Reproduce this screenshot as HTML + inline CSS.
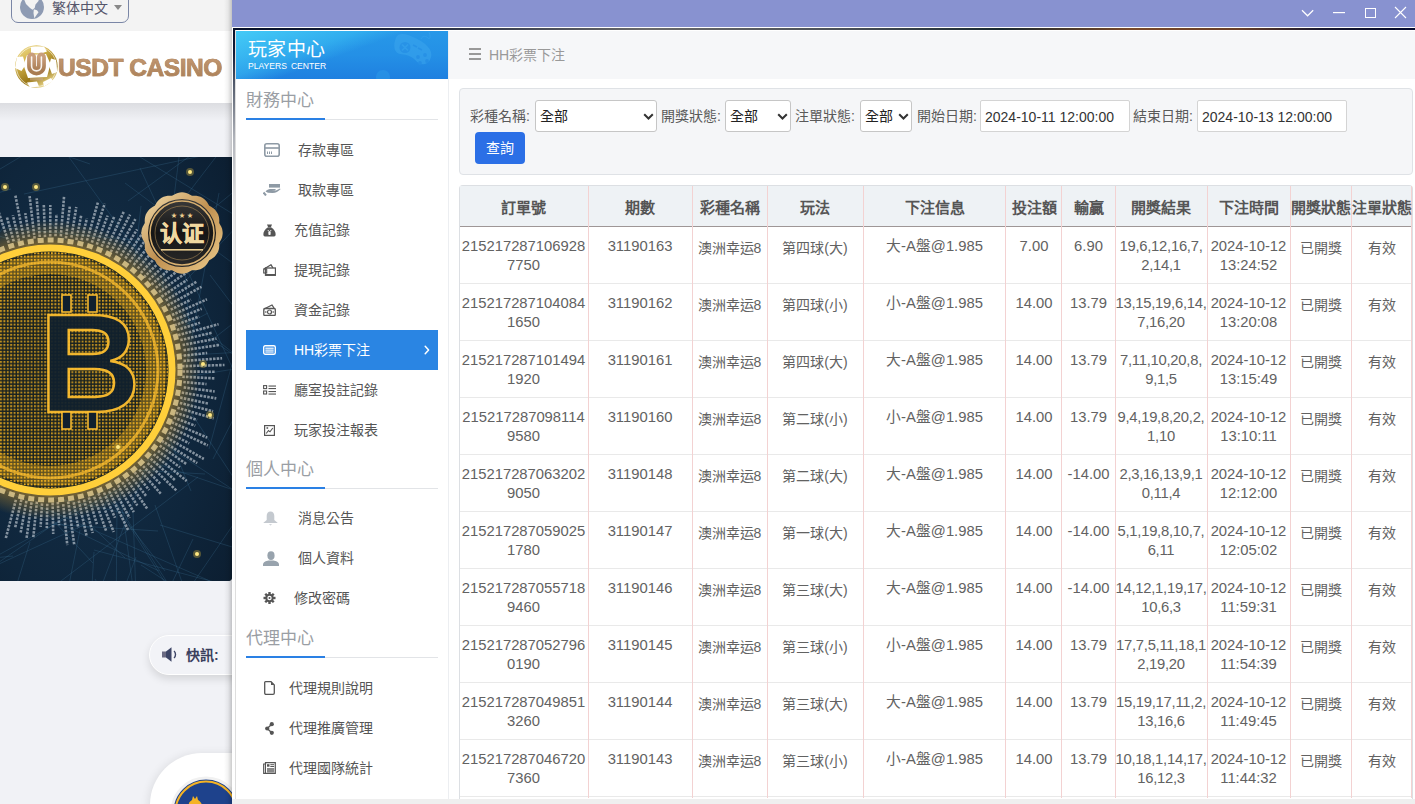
<!DOCTYPE html>
<html lang="zh-TW">
<head>
<meta charset="utf-8">
<style>
*{box-sizing:border-box;margin:0;padding:0}
html,body{width:1415px;height:804px;overflow:hidden}
body{position:relative;background:#f1f2f6;font-family:"Liberation Sans",sans-serif;color:#555}
.abs{position:absolute}
/* left site */
#topstrip{left:0;top:0;width:232px;height:31px;background:#f3f3f3}
#lang{left:11px;top:-10px;width:118px;height:33px;border:1px solid #7a86a6;border-radius:7px;background:#f3f3f3}
#logobar{left:0;top:31px;width:232px;height:72px;background:#fff}
#logoshadow{left:0;top:103px;width:232px;height:18px;background:linear-gradient(#dcdde1,#f1f2f6)}
#btc{left:0;top:157px;width:232px;height:424px;border-radius:0 0 4px 0;overflow:hidden;background:#0b1d33}
#pill{left:149px;top:635px;width:120px;height:40px;border-radius:20px;background:#f2f3f7;border:1px solid #fff;box-shadow:0 4px 8px rgba(0,0,0,.12)}
#circle{left:150px;top:753px;width:200px;height:200px;border-radius:52px;background:#fff;box-shadow:-2px 0 8px rgba(0,0,0,.08)}
#winshadow{left:224px;top:0;width:8px;height:804px;background:linear-gradient(90deg,rgba(0,0,0,0),rgba(0,0,0,.05) 50%,rgba(0,0,0,.2))}
/* window */
#titlebar{left:232px;top:0;width:1183px;height:27px;background:#8892d0}
#win{left:232px;top:27px;width:1183px;height:777px;background:#fff}
#wtop{left:233px;top:28px;width:1182px;height:2px;background:linear-gradient(90deg,#06102a 0%,#1a2238 12%,#3a4050 22%,#6a6a6a 35%,#4a5058 52%,#1a2a30 65%,#7a4a2a 76%,#6a4028 85%,#1a1a30 92%,#02082a 100%)}
#wleft{left:233px;top:28px;width:2px;height:776px;background:linear-gradient(#06102a 0px,#121c3a 25px,#5a6272 60px,#b0b3ba 110px,#e8e8e8 180px,#fafafa 300px,#fff 100%)}
#sidebar{left:236px;top:31px;width:212px;height:773px;background:#fff}
#sbhead{left:236px;top:31px;width:212px;height:48px;background:linear-gradient(160deg,rgba(75,215,250,.8) 0%,rgba(60,195,245,.5) 36%,rgba(60,190,245,0) 50%),linear-gradient(180deg,#2798e8 0%,#2490e6 50%,#1f80e0 100%);overflow:hidden}
#main{left:448px;top:31px;width:967px;height:773px;background:#fff;border-left:1px solid #eceef1}
#crumb{left:449px;top:31px;width:966px;height:48px;background:#f6f7f9}
#bottomstrip{left:232px;top:799px;width:1183px;height:5px;background:#efefef}
#wline{left:235px;top:30px;width:1px;height:774px;background:#dedede}

/* sidebar content */
.sbt{position:absolute;left:246px;width:192px;height:40px;font-size:17px;line-height:40px;color:#9a9ea4;border-bottom:1px solid #e2e4e7}
.sbt span{position:relative;top:.5px}
.sbt:after{content:"";position:absolute;left:0;bottom:-1px;width:79px;height:2px;background:#2a80e4}
.mi{position:absolute;left:246px;width:192px;height:40px;font-size:14px;line-height:40px;color:#555}
.mi .ic{position:absolute;top:0;height:40px;display:flex;align-items:center}
.mi .tx{position:absolute;top:0}
.mi.act{background:#2a85e3;color:#fff}
.mi.act .chev{position:absolute;left:178px;top:0;font-size:14px}
#sbtitle{left:248px;top:39.5px;font-size:19px;line-height:20px;color:#fff;white-space:nowrap;letter-spacing:.4px}
#sbsub{left:248px;top:60.5px;font-size:8.6px;line-height:10px;color:#fff;letter-spacing:0;white-space:nowrap;word-spacing:1.5px}

/* main content */
#ham{left:469px;top:48px;width:12px;height:12px}
#crumbtx{left:489px;top:45px;font-size:14px;line-height:20px;color:#999;white-space:nowrap}
#filter{left:459px;top:88px;width:954px;height:87px;background:#f5f6f8;border:1px solid #dfe2e6;border-radius:4px}
.lb{position:absolute;top:106px;font-size:14px;line-height:20px;color:#5a5a5a;white-space:nowrap}
.sel{position:absolute;top:100px;height:32px;background:#fff;border:1px solid #c6c6c6;border-radius:3px;font-size:14px;line-height:30px;color:#222;padding-left:4px;white-space:nowrap}
.sel svg{display:block}
.inp{position:absolute;top:100px;height:32px;background:#fff;border:1px solid #d4d4d4;border-radius:2px;font-size:14px;line-height:32px;color:#333;padding-left:4px;white-space:nowrap}
#btn{left:475px;top:132px;width:50px;height:32px;background:#2b6fe6;border-radius:4px;color:#fff;font-size:14px;line-height:32px;text-align:center}

/* table */
#tbl{left:459px;top:185px;width:954px;height:619px;background:#fff;border:1px solid #dcdfe3;border-bottom:none;border-radius:4px 4px 0 0;overflow:hidden}
#thead{left:460px;top:186px;width:952px;height:40px;background:#eef2f5}
#thline{left:460px;top:226px;width:952px;height:1px;background:#9e9696}
.hl{position:absolute;left:460px;width:952px;height:1px;background:#e9e9e9}
.vl{position:absolute;top:186px;width:1px;height:612px;background:#f3d2d2}
.th{position:absolute;top:198px;height:20px;font-size:15px;font-weight:bold;line-height:20px;color:#555;text-align:center;white-space:nowrap}
.td{position:absolute;font-size:14.8px;line-height:19px;color:#626262;text-align:center;white-space:nowrap}
.cj{font-size:14px;margin-top:2px}
</style>
</head>
<body>
<div id="topstrip" class="abs"></div>
<div id="lang" class="abs"></div>
<svg class="abs" style="left:20px;top:-5px" width="24" height="24" viewBox="0 0 24 24"><circle cx="12" cy="12" r="12" fill="#8e9bb3"/><path d="M3.5 3 L19 3 L18.5 6 L15.5 9.5 L14.7 13 L12.5 14.8 L10 13 L6 9 Z" fill="#f3f3f3"/><path d="M13.8 14.3 L17 15.2 L18.5 17.3 L14.3 23.2 L13.5 18 Z" fill="#f3f3f3"/></svg>
<div class="abs" style="left:52px;top:-2.5px;font-size:14px;line-height:20px;color:#55556a;white-space:nowrap">繁体中文</div>
<svg class="abs" style="left:114px;top:5px" width="8" height="5" viewBox="0 0 8 5"><path d="M0 0 L8 0 L4 5 Z" fill="#888"/></svg>
<div id="logobar" class="abs"></div>
<svg class="abs" style="left:13px;top:44px" width="46" height="46" viewBox="0 0 46 46">
<defs><linearGradient id="gball" x1="0" y1="0" x2=".6" y2="1"><stop offset="0" stop-color="#f2e4a0"/><stop offset=".35" stop-color="#d8b850"/><stop offset=".75" stop-color="#9a7818"/><stop offset="1" stop-color="#e8d488"/></linearGradient>
<linearGradient id="gtxt" x1="0" y1="0" x2="0" y2="1"><stop offset="0" stop-color="#c99e7c"/><stop offset="1" stop-color="#a97c52"/></linearGradient></defs>
<circle cx="23.4" cy="22.5" r="21.3" fill="url(#gball)"/>
<circle cx="23.4" cy="22.5" r="20" fill="none" stroke="#fff" stroke-width=".8" opacity=".7"/>
<g fill="#fff">
<polygon points="18,3 31,2.5 34,7.5 28,9.5 18,9"/>
<polygon points="4,13 10,12.5 12.5,21 8.5,27 2,24"/>
<polygon points="38,14.5 43,16 44.2,28 39,30 36,22"/>
<polygon points="14,38.5 24,37.5 26,42.5 17,43.5"/>
<polygon points="30,38 38,34 40,37 31,42.5"/>
<polygon points="14,11 33,10 37.5,20 34,33 15,34 10.5,21"/>
</g>
<path d="M18.6 13.1 L18.6 22 C18.6 28.5 28.4 28.5 28.4 22 L28.4 13.1" fill="none" stroke="url(#gtxt)" stroke-width="9" stroke-linecap="round"/>
<path d="M18.6 13.1 L18.6 22 C18.6 28.5 28.4 28.5 28.4 22 L28.4 13.1" fill="none" stroke="#fff" stroke-width="1.6" stroke-linecap="round" opacity=".9"/>
<rect x="17" y="34" width="13" height="2.4" fill="#c8a890" opacity=".6"/>
</svg>
<div class="abs" style="left:58px;top:52px;font-size:24.5px;line-height:32px;font-weight:bold;white-space:nowrap;letter-spacing:-.45px;color:#b58b66;background:linear-gradient(#c99e78,#a57a50);-webkit-background-clip:text;background-clip:text;-webkit-text-fill-color:transparent;-webkit-text-stroke:.6px #b08660">USDT CASINO</div>
<div id="logoshadow" class="abs"></div>
<div id="btc" class="abs"><svg width="232" height="424" viewBox="0 0 232 424"><defs>
<radialGradient id="bgg" cx=".35" cy=".5" r=".9"><stop offset="0" stop-color="#15314a"/><stop offset=".6" stop-color="#0f263c"/><stop offset="1" stop-color="#0b1c2e"/></radialGradient>
<pattern id="dots" width="3.4" height="3.4" patternUnits="userSpaceOnUse"><rect width="2" height="2" fill="#f0b020"/></pattern>
<radialGradient id="cmask" cx=".5" cy=".5" r=".5"><stop offset="0" stop-color="#0e1a22" stop-opacity=".35"/><stop offset=".6" stop-color="#0e1a22" stop-opacity=".2"/><stop offset=".85" stop-color="#0e1a22" stop-opacity=".1"/><stop offset="1" stop-color="#0e1a22" stop-opacity="0"/></radialGradient>
<radialGradient id="glow" cx=".5" cy=".5" r=".5"><stop offset=".7" stop-color="#ffb020" stop-opacity="0"/><stop offset=".82" stop-color="#ffb020" stop-opacity=".45"/><stop offset="1" stop-color="#ffb020" stop-opacity="0"/></radialGradient>
<linearGradient id="badge" x1="0" y1="0" x2="1" y2="1"><stop offset="0" stop-color="#f4e0b0"/><stop offset=".5" stop-color="#c09050"/><stop offset="1" stop-color="#f0d090"/></linearGradient>
<linearGradient id="bdark" x1="0" y1="0" x2="0" y2="1"><stop offset="0" stop-color="#3a3a3a"/><stop offset=".5" stop-color="#151515"/><stop offset="1" stop-color="#2a2a2a"/></linearGradient>
<clipPath id="cc"><circle cx="50" cy="213" r="118"/></clipPath>
</defs><rect width="232" height="424" fill="url(#bgg)"/><line x1="98" y1="242" x2="-79" y2="285" stroke="#3f7598" stroke-width=".6" opacity=".45"/><line x1="118" y1="257" x2="279" y2="363" stroke="#3f7598" stroke-width=".6" opacity=".45"/><line x1="160" y1="368" x2="301" y2="411" stroke="#3f7598" stroke-width=".6" opacity=".45"/><line x1="-28" y1="377" x2="-79" y2="450" stroke="#3f7598" stroke-width=".6" opacity=".45"/><line x1="284" y1="461" x2="184" y2="652" stroke="#3f7598" stroke-width=".6" opacity=".45"/><line x1="-5" y1="-52" x2="-13" y2="41" stroke="#3f7598" stroke-width=".6" opacity=".45"/><line x1="7" y1="71" x2="188" y2="88" stroke="#3f7598" stroke-width=".6" opacity=".45"/><line x1="94" y1="395" x2="81" y2="615" stroke="#3f7598" stroke-width=".6" opacity=".45"/><line x1="115" y1="298" x2="134" y2="438" stroke="#3f7598" stroke-width=".6" opacity=".45"/><line x1="289" y1="478" x2="83" y2="591" stroke="#3f7598" stroke-width=".6" opacity=".45"/><line x1="50" y1="64" x2="109" y2="139" stroke="#3f7598" stroke-width=".6" opacity=".45"/><line x1="208" y1="156" x2="62" y2="233" stroke="#3f7598" stroke-width=".6" opacity=".45"/><line x1="275" y1="398" x2="401" y2="398" stroke="#3f7598" stroke-width=".6" opacity=".45"/><line x1="259" y1="194" x2="91" y2="204" stroke="#3f7598" stroke-width=".6" opacity=".45"/><line x1="-34" y1="280" x2="-141" y2="369" stroke="#3f7598" stroke-width=".6" opacity=".45"/><line x1="-29" y1="120" x2="-275" y2="147" stroke="#3f7598" stroke-width=".6" opacity=".45"/><line x1="-19" y1="73" x2="70" y2="102" stroke="#3f7598" stroke-width=".6" opacity=".45"/><line x1="219" y1="36" x2="186" y2="211" stroke="#3f7598" stroke-width=".6" opacity=".45"/><line x1="7" y1="335" x2="210" y2="424" stroke="#3f7598" stroke-width=".6" opacity=".45"/><line x1="-19" y1="167" x2="90" y2="254" stroke="#3f7598" stroke-width=".6" opacity=".45"/><line x1="280" y1="374" x2="438" y2="598" stroke="#3f7598" stroke-width=".6" opacity=".45"/><line x1="14" y1="153" x2="-185" y2="251" stroke="#3f7598" stroke-width=".6" opacity=".45"/><line x1="-25" y1="474" x2="82" y2="559" stroke="#3f7598" stroke-width=".6" opacity=".45"/><line x1="210" y1="118" x2="268" y2="195" stroke="#3f7598" stroke-width=".6" opacity=".45"/><line x1="-28" y1="255" x2="125" y2="401" stroke="#3f7598" stroke-width=".6" opacity=".45"/><line x1="70" y1="185" x2="-115" y2="209" stroke="#3f7598" stroke-width=".6" opacity=".45"/><line x1="141" y1="408" x2="237" y2="470" stroke="#3f7598" stroke-width=".6" opacity=".45"/><line x1="258" y1="382" x2="344" y2="468" stroke="#3f7598" stroke-width=".6" opacity=".45"/><line x1="199" y1="448" x2="434" y2="615" stroke="#3f7598" stroke-width=".6" opacity=".45"/><line x1="249" y1="266" x2="274" y2="366" stroke="#3f7598" stroke-width=".6" opacity=".45"/><line x1="-46" y1="460" x2="126" y2="620" stroke="#3f7598" stroke-width=".6" opacity=".45"/><line x1="30" y1="385" x2="-13" y2="523" stroke="#3f7598" stroke-width=".6" opacity=".45"/><line x1="1" y1="329" x2="129" y2="357" stroke="#3f7598" stroke-width=".6" opacity=".45"/><line x1="136" y1="400" x2="86" y2="533" stroke="#3f7598" stroke-width=".6" opacity=".45"/><line x1="261" y1="50" x2="400" y2="57" stroke="#3f7598" stroke-width=".6" opacity=".45"/><line x1="96" y1="-27" x2="233" y2="57" stroke="#3f7598" stroke-width=".6" opacity=".45"/><line x1="140" y1="11" x2="256" y2="262" stroke="#3f7598" stroke-width=".6" opacity=".45"/><line x1="283" y1="295" x2="165" y2="467" stroke="#3f7598" stroke-width=".6" opacity=".45"/><line x1="-11" y1="-41" x2="269" y2="-25" stroke="#3f7598" stroke-width=".6" opacity=".45"/><line x1="185" y1="460" x2="405" y2="475" stroke="#3f7598" stroke-width=".6" opacity=".45"/><line x1="109" y1="334" x2="270" y2="587" stroke="#3f7598" stroke-width=".6" opacity=".45"/><line x1="-34" y1="235" x2="-222" y2="439" stroke="#3f7598" stroke-width=".6" opacity=".45"/><line x1="198" y1="320" x2="-26" y2="490" stroke="#3f7598" stroke-width=".6" opacity=".45"/><line x1="63" y1="310" x2="-195" y2="393" stroke="#3f7598" stroke-width=".6" opacity=".45"/><line x1="86" y1="367" x2="-101" y2="453" stroke="#3f7598" stroke-width=".6" opacity=".45"/><line x1="159" y1="146" x2="104" y2="353" stroke="#3f7598" stroke-width=".6" opacity=".45"/><line x1="-32" y1="285" x2="-305" y2="291" stroke="#3f7598" stroke-width=".6" opacity=".45"/><line x1="195" y1="150" x2="55" y2="303" stroke="#3f7598" stroke-width=".6" opacity=".45"/><line x1="94" y1="393" x2="331" y2="456" stroke="#3f7598" stroke-width=".6" opacity=".45"/><line x1="-50" y1="265" x2="-42" y2="395" stroke="#3f7598" stroke-width=".6" opacity=".45"/><line x1="184" y1="209" x2="85" y2="473" stroke="#3f7598" stroke-width=".6" opacity=".45"/><line x1="30" y1="-54" x2="164" y2="132" stroke="#3f7598" stroke-width=".6" opacity=".45"/><line x1="11" y1="32" x2="-204" y2="97" stroke="#3f7598" stroke-width=".6" opacity=".45"/><line x1="95" y1="422" x2="212" y2="615" stroke="#3f7598" stroke-width=".6" opacity=".45"/><line x1="9" y1="173" x2="-221" y2="334" stroke="#3f7598" stroke-width=".6" opacity=".45"/><line x1="248" y1="148" x2="209" y2="292" stroke="#3f7598" stroke-width=".6" opacity=".45"/><line x1="-12" y1="208" x2="-245" y2="339" stroke="#3f7598" stroke-width=".6" opacity=".45"/><line x1="189" y1="453" x2="265" y2="543" stroke="#3f7598" stroke-width=".6" opacity=".45"/><line x1="98" y1="89" x2="232" y2="195" stroke="#3f7598" stroke-width=".6" opacity=".45"/><line x1="159" y1="207" x2="304" y2="428" stroke="#3f7598" stroke-width=".6" opacity=".45"/><line x1="284" y1="184" x2="368" y2="205" stroke="#3f7598" stroke-width=".6" opacity=".45"/><line x1="245" y1="-38" x2="120" y2="125" stroke="#3f7598" stroke-width=".6" opacity=".45"/><line x1="48" y1="367" x2="158" y2="374" stroke="#3f7598" stroke-width=".6" opacity=".45"/><line x1="99" y1="-47" x2="-15" y2="21" stroke="#3f7598" stroke-width=".6" opacity=".45"/><line x1="-11" y1="-35" x2="-81" y2="129" stroke="#3f7598" stroke-width=".6" opacity=".45"/><line x1="160" y1="294" x2="-79" y2="459" stroke="#3f7598" stroke-width=".6" opacity=".45"/><line x1="180" y1="48" x2="189" y2="167" stroke="#3f7598" stroke-width=".6" opacity=".45"/><line x1="-56" y1="195" x2="-131" y2="288" stroke="#3f7598" stroke-width=".6" opacity=".45"/><line x1="35" y1="127" x2="-78" y2="285" stroke="#3f7598" stroke-width=".6" opacity=".45"/><line x1="155" y1="348" x2="239" y2="588" stroke="#3f7598" stroke-width=".6" opacity=".45"/><line x1="257" y1="-13" x2="24" y2="37" stroke="#3f7598" stroke-width=".6" opacity=".45"/><line x1="-15" y1="185" x2="-122" y2="444" stroke="#3f7598" stroke-width=".6" opacity=".45"/><line x1="72" y1="247" x2="-165" y2="342" stroke="#3f7598" stroke-width=".6" opacity=".45"/><line x1="270" y1="190" x2="213" y2="302" stroke="#3f7598" stroke-width=".6" opacity=".45"/><line x1="193" y1="382" x2="90" y2="597" stroke="#3f7598" stroke-width=".6" opacity=".45"/><line x1="15" y1="426" x2="-280" y2="444" stroke="#3f7598" stroke-width=".6" opacity=".45"/><line x1="128" y1="367" x2="278" y2="604" stroke="#3f7598" stroke-width=".6" opacity=".45"/><line x1="240" y1="128" x2="411" y2="174" stroke="#3f7598" stroke-width=".6" opacity=".45"/><line x1="133" y1="355" x2="136" y2="441" stroke="#3f7598" stroke-width=".6" opacity=".45"/><line x1="223" y1="-25" x2="128" y2="44" stroke="#3f7598" stroke-width=".6" opacity=".45"/><line x1="57" y1="365" x2="159" y2="414" stroke="#3f7598" stroke-width=".6" opacity=".45"/><line x1="121" y1="331" x2="-82" y2="442" stroke="#3f7598" stroke-width=".6" opacity=".45"/><line x1="271" y1="206" x2="173" y2="222" stroke="#3f7598" stroke-width=".6" opacity=".45"/><line x1="17" y1="224" x2="165" y2="414" stroke="#3f7598" stroke-width=".6" opacity=".45"/><line x1="164" y1="222" x2="-16" y2="318" stroke="#3f7598" stroke-width=".6" opacity=".45"/><line x1="49" y1="146" x2="-197" y2="276" stroke="#3f7598" stroke-width=".6" opacity=".45"/><line x1="13" y1="399" x2="-181" y2="419" stroke="#3f7598" stroke-width=".6" opacity=".45"/><line x1="141" y1="49" x2="119" y2="238" stroke="#3f7598" stroke-width=".6" opacity=".45"/><line x1="152" y1="-45" x2="-41" y2="-26" stroke="#3f7598" stroke-width=".6" opacity=".45"/><line x1="80" y1="373" x2="43" y2="557" stroke="#3f7598" stroke-width=".6" opacity=".45"/><line x1="182" y1="-24" x2="161" y2="145" stroke="#3f7598" stroke-width=".6" opacity=".45"/><line x1="275" y1="439" x2="397" y2="576" stroke="#3f7598" stroke-width=".6" opacity=".45"/><line x1="-16" y1="174" x2="-248" y2="326" stroke="#3f7598" stroke-width=".6" opacity=".45"/><line x1="107" y1="111" x2="285" y2="233" stroke="#3f7598" stroke-width=".6" opacity=".45"/><line x1="264" y1="10" x2="198" y2="64" stroke="#3f7598" stroke-width=".6" opacity=".45"/><line x1="8" y1="63" x2="-76" y2="188" stroke="#3f7598" stroke-width=".6" opacity=".45"/><line x1="64" y1="275" x2="292" y2="353" stroke="#3f7598" stroke-width=".6" opacity=".45"/><line x1="-17" y1="216" x2="70" y2="303" stroke="#3f7598" stroke-width=".6" opacity=".45"/><line x1="126" y1="176" x2="191" y2="334" stroke="#3f7598" stroke-width=".6" opacity=".45"/><line x1="125" y1="26" x2="301" y2="157" stroke="#3f7598" stroke-width=".6" opacity=".45"/><line x1="163" y1="226" x2="-28" y2="323" stroke="#3f7598" stroke-width=".6" opacity=".45"/><line x1="240" y1="66" x2="63" y2="254" stroke="#3f7598" stroke-width=".6" opacity=".45"/><line x1="256" y1="111" x2="411" y2="347" stroke="#3f7598" stroke-width=".6" opacity=".45"/><line x1="16" y1="479" x2="-86" y2="517" stroke="#3f7598" stroke-width=".6" opacity=".45"/><line x1="24" y1="332" x2="93" y2="406" stroke="#3f7598" stroke-width=".6" opacity=".45"/><line x1="231" y1="168" x2="146" y2="234" stroke="#3f7598" stroke-width=".6" opacity=".45"/><line x1="81" y1="310" x2="205" y2="317" stroke="#3f7598" stroke-width=".6" opacity=".45"/><line x1="179" y1="432" x2="74" y2="443" stroke="#3f7598" stroke-width=".6" opacity=".45"/><line x1="117" y1="349" x2="115" y2="580" stroke="#3f7598" stroke-width=".6" opacity=".45"/><line x1="6" y1="-22" x2="90" y2="7" stroke="#3f7598" stroke-width=".6" opacity=".45"/><line x1="8.7" y1="85.9" x2="-1.6" y2="54.2" stroke="#e4eaf0" stroke-width="2.6" stroke-dasharray="2.5 1.2" opacity=".55"/><line x1="13.7" y1="84.3" x2="6.9" y2="60.0" stroke="#e4eaf0" stroke-width="2.6" stroke-dasharray="2.5 1.2" opacity=".55"/><line x1="19.1" y1="84.1" x2="12.9" y2="58.3" stroke="#e4eaf0" stroke-width="2.6" stroke-dasharray="2.5 1.2" opacity=".55"/><line x1="23.8" y1="81.0" x2="15.3" y2="38.1" stroke="#e4eaf0" stroke-width="2.6" stroke-dasharray="2.5 1.2" opacity=".55"/><line x1="29.0" y1="79.9" x2="25.3" y2="56.1" stroke="#e4eaf0" stroke-width="2.6" stroke-dasharray="2.5 1.2" opacity=".55"/><line x1="34.6" y1="81.7" x2="29.6" y2="39.1" stroke="#e4eaf0" stroke-width="2.6" stroke-dasharray="2.5 1.2" opacity=".55"/><line x1="39.7" y1="80.0" x2="36.7" y2="41.3" stroke="#e4eaf0" stroke-width="2.6" stroke-dasharray="2.5 1.2" opacity=".55"/><line x1="45.0" y1="80.1" x2="43.8" y2="47.9" stroke="#e4eaf0" stroke-width="2.6" stroke-dasharray="2.5 1.2" opacity=".55"/><line x1="50.2" y1="79.5" x2="50.3" y2="48.0" stroke="#e4eaf0" stroke-width="2.6" stroke-dasharray="2.5 1.2" opacity=".55"/><line x1="55.5" y1="79.3" x2="56.5" y2="57.0" stroke="#e4eaf0" stroke-width="2.6" stroke-dasharray="2.5 1.2" opacity=".55"/><line x1="60.8" y1="79.3" x2="64.1" y2="38.9" stroke="#e4eaf0" stroke-width="2.6" stroke-dasharray="2.5 1.2" opacity=".55"/><line x1="65.9" y1="81.4" x2="69.8" y2="49.7" stroke="#e4eaf0" stroke-width="2.6" stroke-dasharray="2.5 1.2" opacity=".55"/><line x1="71.4" y1="80.5" x2="76.3" y2="50.0" stroke="#e4eaf0" stroke-width="2.6" stroke-dasharray="2.5 1.2" opacity=".55"/><line x1="76.3" y1="83.0" x2="81.3" y2="57.9" stroke="#e4eaf0" stroke-width="2.6" stroke-dasharray="2.5 1.2" opacity=".55"/><line x1="81.6" y1="83.3" x2="86.9" y2="61.5" stroke="#e4eaf0" stroke-width="2.6" stroke-dasharray="2.5 1.2" opacity=".55"/><line x1="87.0" y1="83.5" x2="97.9" y2="45.4" stroke="#e4eaf0" stroke-width="2.6" stroke-dasharray="2.5 1.2" opacity=".55"/><line x1="91.9" y1="85.6" x2="104.7" y2="46.7" stroke="#e4eaf0" stroke-width="2.6" stroke-dasharray="2.5 1.2" opacity=".55"/><line x1="96.8" y1="87.6" x2="107.6" y2="58.6" stroke="#e4eaf0" stroke-width="2.6" stroke-dasharray="2.5 1.2" opacity=".55"/><line x1="101.7" y1="89.6" x2="114.5" y2="59.1" stroke="#e4eaf0" stroke-width="2.6" stroke-dasharray="2.5 1.2" opacity=".55"/><line x1="107.0" y1="90.7" x2="123.8" y2="54.7" stroke="#e4eaf0" stroke-width="2.6" stroke-dasharray="2.5 1.2" opacity=".55"/><line x1="110.8" y1="95.0" x2="130.1" y2="57.6" stroke="#e4eaf0" stroke-width="2.6" stroke-dasharray="2.5 1.2" opacity=".55"/><line x1="116.2" y1="96.2" x2="135.4" y2="62.2" stroke="#e4eaf0" stroke-width="2.6" stroke-dasharray="2.5 1.2" opacity=".55"/><line x1="120.8" y1="98.7" x2="137.1" y2="72.4" stroke="#e4eaf0" stroke-width="2.6" stroke-dasharray="2.5 1.2" opacity=".55"/><line x1="125.4" y1="101.4" x2="148.6" y2="67.1" stroke="#e4eaf0" stroke-width="2.6" stroke-dasharray="2.5 1.2" opacity=".55"/><line x1="129.4" y1="105.0" x2="152.4" y2="73.6" stroke="#e4eaf0" stroke-width="2.6" stroke-dasharray="2.5 1.2" opacity=".55"/><line x1="133.7" y1="108.0" x2="153.0" y2="83.8" stroke="#e4eaf0" stroke-width="2.6" stroke-dasharray="2.5 1.2" opacity=".55"/><line x1="137.7" y1="111.5" x2="153.1" y2="93.7" stroke="#e4eaf0" stroke-width="2.6" stroke-dasharray="2.5 1.2" opacity=".55"/><line x1="140.9" y1="115.9" x2="163.0" y2="92.3" stroke="#e4eaf0" stroke-width="2.6" stroke-dasharray="2.5 1.2" opacity=".55"/><line x1="144.0" y1="120.2" x2="165.2" y2="99.3" stroke="#e4eaf0" stroke-width="2.6" stroke-dasharray="2.5 1.2" opacity=".55"/><line x1="148.9" y1="122.8" x2="175.3" y2="98.7" stroke="#e4eaf0" stroke-width="2.6" stroke-dasharray="2.5 1.2" opacity=".55"/><line x1="151.5" y1="127.5" x2="184.2" y2="100.0" stroke="#e4eaf0" stroke-width="2.6" stroke-dasharray="2.5 1.2" opacity=".55"/><line x1="155.8" y1="130.8" x2="179.1" y2="112.7" stroke="#e4eaf0" stroke-width="2.6" stroke-dasharray="2.5 1.2" opacity=".55"/><line x1="159.0" y1="135.0" x2="187.1" y2="115.0" stroke="#e4eaf0" stroke-width="2.6" stroke-dasharray="2.5 1.2" opacity=".55"/><line x1="161.6" y1="139.6" x2="187.2" y2="122.8" stroke="#e4eaf0" stroke-width="2.6" stroke-dasharray="2.5 1.2" opacity=".55"/><line x1="165.7" y1="143.4" x2="196.6" y2="124.7" stroke="#e4eaf0" stroke-width="2.6" stroke-dasharray="2.5 1.2" opacity=".55"/><line x1="167.5" y1="148.4" x2="201.5" y2="129.8" stroke="#e4eaf0" stroke-width="2.6" stroke-dasharray="2.5 1.2" opacity=".55"/><line x1="170.7" y1="152.7" x2="190.9" y2="142.7" stroke="#e4eaf0" stroke-width="2.6" stroke-dasharray="2.5 1.2" opacity=".55"/><line x1="172.0" y1="158.0" x2="206.9" y2="142.3" stroke="#e4eaf0" stroke-width="2.6" stroke-dasharray="2.5 1.2" opacity=".55"/><line x1="173.1" y1="163.3" x2="201.7" y2="151.7" stroke="#e4eaf0" stroke-width="2.6" stroke-dasharray="2.5 1.2" opacity=".55"/><line x1="174.4" y1="168.4" x2="199.1" y2="159.5" stroke="#e4eaf0" stroke-width="2.6" stroke-dasharray="2.5 1.2" opacity=".55"/><line x1="177.0" y1="173.0" x2="200.0" y2="165.8" stroke="#e4eaf0" stroke-width="2.6" stroke-dasharray="2.5 1.2" opacity=".55"/><line x1="178.1" y1="178.2" x2="218.6" y2="167.2" stroke="#e4eaf0" stroke-width="2.6" stroke-dasharray="2.5 1.2" opacity=".55"/><line x1="180.3" y1="183.1" x2="212.6" y2="175.6" stroke="#e4eaf0" stroke-width="2.6" stroke-dasharray="2.5 1.2" opacity=".55"/><line x1="182.6" y1="188.0" x2="216.5" y2="181.6" stroke="#e4eaf0" stroke-width="2.6" stroke-dasharray="2.5 1.2" opacity=".55"/><line x1="183.5" y1="193.2" x2="219.2" y2="188.0" stroke="#e4eaf0" stroke-width="2.6" stroke-dasharray="2.5 1.2" opacity=".55"/><line x1="183.7" y1="198.6" x2="207.2" y2="196.0" stroke="#e4eaf0" stroke-width="2.6" stroke-dasharray="2.5 1.2" opacity=".55"/><line x1="183.5" y1="203.9" x2="222.1" y2="201.3" stroke="#e4eaf0" stroke-width="2.6" stroke-dasharray="2.5 1.2" opacity=".55"/><line x1="182.1" y1="209.2" x2="224.5" y2="208.0" stroke="#e4eaf0" stroke-width="2.6" stroke-dasharray="2.5 1.2" opacity=".55"/><line x1="182.5" y1="214.5" x2="214.8" y2="214.8" stroke="#e4eaf0" stroke-width="2.6" stroke-dasharray="2.5 1.2" opacity=".55"/><line x1="182.3" y1="219.7" x2="215.2" y2="221.4" stroke="#e4eaf0" stroke-width="2.6" stroke-dasharray="2.5 1.2" opacity=".55"/><line x1="183.3" y1="225.0" x2="206.5" y2="227.1" stroke="#e4eaf0" stroke-width="2.6" stroke-dasharray="2.5 1.2" opacity=".55"/><line x1="183.7" y1="230.4" x2="214.7" y2="234.5" stroke="#e4eaf0" stroke-width="2.6" stroke-dasharray="2.5 1.2" opacity=".55"/><line x1="181.7" y1="235.5" x2="216.3" y2="241.4" stroke="#e4eaf0" stroke-width="2.6" stroke-dasharray="2.5 1.2" opacity=".55"/><line x1="180.2" y1="240.6" x2="207.9" y2="246.4" stroke="#e4eaf0" stroke-width="2.6" stroke-dasharray="2.5 1.2" opacity=".55"/><line x1="179.9" y1="245.9" x2="213.1" y2="254.3" stroke="#e4eaf0" stroke-width="2.6" stroke-dasharray="2.5 1.2" opacity=".55"/><line x1="177.4" y1="250.7" x2="213.6" y2="261.4" stroke="#e4eaf0" stroke-width="2.6" stroke-dasharray="2.5 1.2" opacity=".55"/><line x1="175.8" y1="255.7" x2="197.0" y2="262.9" stroke="#e4eaf0" stroke-width="2.6" stroke-dasharray="2.5 1.2" opacity=".55"/><line x1="173.9" y1="260.6" x2="195.3" y2="268.8" stroke="#e4eaf0" stroke-width="2.6" stroke-dasharray="2.5 1.2" opacity=".55"/><line x1="171.7" y1="265.3" x2="207.2" y2="280.6" stroke="#e4eaf0" stroke-width="2.6" stroke-dasharray="2.5 1.2" opacity=".55"/><line x1="170.2" y1="270.4" x2="207.8" y2="288.4" stroke="#e4eaf0" stroke-width="2.6" stroke-dasharray="2.5 1.2" opacity=".55"/><line x1="168.8" y1="275.6" x2="189.2" y2="286.4" stroke="#e4eaf0" stroke-width="2.6" stroke-dasharray="2.5 1.2" opacity=".55"/><line x1="166.8" y1="280.6" x2="203.8" y2="302.0" stroke="#e4eaf0" stroke-width="2.6" stroke-dasharray="2.5 1.2" opacity=".55"/><line x1="161.7" y1="283.7" x2="197.2" y2="306.1" stroke="#e4eaf0" stroke-width="2.6" stroke-dasharray="2.5 1.2" opacity=".55"/><line x1="159.7" y1="288.6" x2="186.5" y2="307.1" stroke="#e4eaf0" stroke-width="2.6" stroke-dasharray="2.5 1.2" opacity=".55"/><line x1="158.0" y1="293.9" x2="179.9" y2="310.3" stroke="#e4eaf0" stroke-width="2.6" stroke-dasharray="2.5 1.2" opacity=".55"/><line x1="153.6" y1="297.2" x2="186.7" y2="324.1" stroke="#e4eaf0" stroke-width="2.6" stroke-dasharray="2.5 1.2" opacity=".55"/><line x1="150.7" y1="301.7" x2="174.9" y2="323.0" stroke="#e4eaf0" stroke-width="2.6" stroke-dasharray="2.5 1.2" opacity=".55"/><line x1="147.7" y1="306.1" x2="176.6" y2="333.7" stroke="#e4eaf0" stroke-width="2.6" stroke-dasharray="2.5 1.2" opacity=".55"/><line x1="143.1" y1="309.1" x2="160.2" y2="326.7" stroke="#e4eaf0" stroke-width="2.6" stroke-dasharray="2.5 1.2" opacity=".55"/><line x1="139.3" y1="312.7" x2="160.7" y2="336.6" stroke="#e4eaf0" stroke-width="2.6" stroke-dasharray="2.5 1.2" opacity=".55"/><line x1="134.5" y1="315.2" x2="149.2" y2="333.0" stroke="#e4eaf0" stroke-width="2.6" stroke-dasharray="2.5 1.2" opacity=".55"/><line x1="131.0" y1="319.2" x2="146.0" y2="338.9" stroke="#e4eaf0" stroke-width="2.6" stroke-dasharray="2.5 1.2" opacity=".55"/><line x1="126.6" y1="322.1" x2="147.6" y2="352.2" stroke="#e4eaf0" stroke-width="2.6" stroke-dasharray="2.5 1.2" opacity=".55"/><line x1="122.2" y1="325.1" x2="137.3" y2="348.5" stroke="#e4eaf0" stroke-width="2.6" stroke-dasharray="2.5 1.2" opacity=".55"/><line x1="117.9" y1="328.2" x2="133.8" y2="355.1" stroke="#e4eaf0" stroke-width="2.6" stroke-dasharray="2.5 1.2" opacity=".55"/><line x1="113.6" y1="331.3" x2="129.6" y2="361.0" stroke="#e4eaf0" stroke-width="2.6" stroke-dasharray="2.5 1.2" opacity=".55"/><line x1="109.2" y1="334.3" x2="128.0" y2="372.9" stroke="#e4eaf0" stroke-width="2.6" stroke-dasharray="2.5 1.2" opacity=".55"/><line x1="104.0" y1="335.8" x2="115.0" y2="360.8" stroke="#e4eaf0" stroke-width="2.6" stroke-dasharray="2.5 1.2" opacity=".55"/><line x1="98.4" y1="336.2" x2="113.7" y2="374.9" stroke="#e4eaf0" stroke-width="2.6" stroke-dasharray="2.5 1.2" opacity=".55"/><line x1="94.2" y1="339.9" x2="106.0" y2="373.6" stroke="#e4eaf0" stroke-width="2.6" stroke-dasharray="2.5 1.2" opacity=".55"/><line x1="88.8" y1="340.3" x2="96.9" y2="367.1" stroke="#e4eaf0" stroke-width="2.6" stroke-dasharray="2.5 1.2" opacity=".55"/><line x1="84.0" y1="342.7" x2="92.7" y2="376.0" stroke="#e4eaf0" stroke-width="2.6" stroke-dasharray="2.5 1.2" opacity=".55"/><line x1="78.8" y1="343.6" x2="86.5" y2="378.7" stroke="#e4eaf0" stroke-width="2.6" stroke-dasharray="2.5 1.2" opacity=".55"/><line x1="73.7" y1="345.2" x2="78.3" y2="370.9" stroke="#e4eaf0" stroke-width="2.6" stroke-dasharray="2.5 1.2" opacity=".55"/><line x1="68.2" y1="344.5" x2="74.2" y2="387.6" stroke="#e4eaf0" stroke-width="2.6" stroke-dasharray="2.5 1.2" opacity=".55"/><line x1="63.2" y1="347.1" x2="67.3" y2="388.2" stroke="#e4eaf0" stroke-width="2.6" stroke-dasharray="2.5 1.2" opacity=".55"/><line x1="57.8" y1="344.9" x2="59.1" y2="368.2" stroke="#e4eaf0" stroke-width="2.6" stroke-dasharray="2.5 1.2" opacity=".55"/><line x1="52.6" y1="345.8" x2="53.2" y2="377.1" stroke="#e4eaf0" stroke-width="2.6" stroke-dasharray="2.5 1.2" opacity=".55"/><line x1="47.3" y1="346.8" x2="46.8" y2="371.1" stroke="#e4eaf0" stroke-width="2.6" stroke-dasharray="2.5 1.2" opacity=".55"/><line x1="42.0" y1="346.4" x2="40.6" y2="369.9" stroke="#e4eaf0" stroke-width="2.6" stroke-dasharray="2.5 1.2" opacity=".55"/><line x1="36.9" y1="344.6" x2="33.2" y2="381.3" stroke="#e4eaf0" stroke-width="2.6" stroke-dasharray="2.5 1.2" opacity=".55"/><line x1="31.5" y1="345.4" x2="26.6" y2="380.9" stroke="#e4eaf0" stroke-width="2.6" stroke-dasharray="2.5 1.2" opacity=".55"/><line x1="26.4" y1="344.0" x2="20.6" y2="376.0" stroke="#e4eaf0" stroke-width="2.6" stroke-dasharray="2.5 1.2" opacity=".55"/><line x1="21.4" y1="342.5" x2="15.0" y2="371.4" stroke="#e4eaf0" stroke-width="2.6" stroke-dasharray="2.5 1.2" opacity=".55"/><line x1="15.9" y1="342.8" x2="5.6" y2="381.9" stroke="#e4eaf0" stroke-width="2.6" stroke-dasharray="2.5 1.2" opacity=".55"/><circle cx="50" cy="213" r="150" fill="url(#glow)"/><circle cx="50" cy="213" r="122" fill="#1c2420"/><g clip-path="url(#cc)"><rect x="-80" y="90" width="260" height="250" fill="url(#dots)" opacity="1"/></g><circle cx="50" cy="213" r="122" fill="url(#cmask)"/><circle cx="50" cy="213" r="106" fill="none" stroke="#f0b020" stroke-width="20" opacity=".32"/><text x="90" y="255" text-anchor="middle" font-family="Liberation Sans" font-weight="bold" font-size="141" fill="#10202e" stroke="#ffc030" stroke-width="2.5" opacity=".92">B</text><rect x="62" y="138" width="9" height="17" fill="#10202e" stroke="#ffc030" stroke-width="1.5"/><rect x="62" y="255" width="9" height="17" fill="#10202e" stroke="#ffc030" stroke-width="1.5"/><rect x="88" y="138" width="9" height="17" fill="#10202e" stroke="#ffc030" stroke-width="1.5"/><rect x="88" y="255" width="9" height="17" fill="#10202e" stroke="#ffc030" stroke-width="1.5"/><circle cx="50" cy="213" r="122" fill="none" stroke="#ffcf3a" stroke-width="7"/><circle cx="50" cy="213" r="108" fill="none" stroke="#ffc030" stroke-width="3" opacity=".7"/><circle cx="50" cy="213" r="130" fill="none" stroke="#f8e0a0" stroke-width="5" stroke-dasharray="6 4" opacity=".7"/><circle cx="36" cy="30" r="2" fill="#fff3a0"/><circle cx="36" cy="30" r="4" fill="#ffd040" opacity=".3"/><circle cx="5" cy="30" r="2" fill="#fff3a0"/><circle cx="5" cy="30" r="4" fill="#ffd040" opacity=".3"/><circle cx="190" cy="15" r="2" fill="#fff3a0"/><circle cx="190" cy="15" r="4" fill="#ffd040" opacity=".3"/><circle cx="203" cy="207" r="2" fill="#fff3a0"/><circle cx="203" cy="207" r="4" fill="#ffd040" opacity=".3"/><circle cx="210" cy="258" r="2" fill="#fff3a0"/><circle cx="210" cy="258" r="4" fill="#ffd040" opacity=".3"/><circle cx="197" cy="397" r="2" fill="#fff3a0"/><circle cx="197" cy="397" r="4" fill="#ffd040" opacity=".3"/><circle cx="118" cy="290" r="2" fill="#fff3a0"/><circle cx="118" cy="290" r="4" fill="#ffd040" opacity=".3"/><polygon points="222.7,76.0 222.5,78.1 222.1,80.2 221.3,82.2 220.3,84.1 219.2,86.0 219.3,88.1 219.2,90.3 218.8,92.4 218.2,94.4 217.2,96.3 216.0,98.1 214.6,99.7 212.9,101.0 211.1,102.2 209.2,103.2 208.2,105.1 207.0,106.9 205.7,108.6 204.1,110.0 202.3,111.2 200.4,112.2 198.4,112.8 196.3,113.2 194.1,113.3 192.0,113.2 190.1,114.3 188.2,115.3 186.2,116.1 184.1,116.5 182.0,116.7 179.9,116.5 177.8,116.1 175.8,115.3 173.9,114.3 172.0,113.2 169.9,113.3 167.7,113.2 165.6,112.8 163.6,112.2 161.7,111.2 159.9,110.0 158.3,108.6 157.0,106.9 155.8,105.1 154.8,103.2 152.9,102.2 151.1,101.0 149.4,99.7 148.0,98.1 146.8,96.3 145.8,94.4 145.2,92.4 144.8,90.3 144.7,88.1 144.8,86.0 143.7,84.1 142.7,82.2 141.9,80.2 141.5,78.1 141.3,76.0 141.5,73.9 141.9,71.8 142.7,69.8 143.7,67.9 144.8,66.0 144.7,63.9 144.8,61.7 145.2,59.6 145.8,57.6 146.8,55.7 148.0,53.9 149.4,52.3 151.1,51.0 152.9,49.8 154.8,48.8 155.8,46.9 157.0,45.1 158.3,43.4 159.9,42.0 161.6,40.8 163.6,39.8 165.6,39.2 167.7,38.8 169.9,38.7 172.0,38.8 173.9,37.7 175.8,36.7 177.8,35.9 179.9,35.5 182.0,35.3 184.1,35.5 186.2,35.9 188.2,36.7 190.1,37.7 192.0,38.8 194.1,38.7 196.3,38.8 198.4,39.2 200.4,39.8 202.3,40.8 204.1,42.0 205.7,43.4 207.0,45.1 208.2,46.9 209.2,48.8 211.1,49.8 212.9,51.0 214.6,52.3 216.0,53.9 217.2,55.7 218.2,57.6 218.8,59.6 219.2,61.7 219.3,63.9 219.2,66.0 220.3,67.9 221.3,69.8 222.1,71.8 222.5,73.9" fill="url(#badge)"/><circle cx="182" cy="76" r="34" fill="url(#bdark)"/><circle cx="182" cy="76" r="32" fill="none" stroke="#d8b070" stroke-width="1.6"/><circle cx="182" cy="76" r="27" fill="none" stroke="#c8a060" stroke-width=".8" opacity=".6"/><text x="182" y="84" text-anchor="middle" font-family="Liberation Sans" font-weight="bold" font-size="22" fill="#f0d8a0" stroke="#f0d8a0" stroke-width=".6">认证</text><rect x="161" y="92" width="42" height="1.6" fill="#e8cc90"/><text x="182" y="60" text-anchor="middle" font-size="6" fill="#e8cc90">★ ★ ★</text></svg></div>
<div id="pill" class="abs"></div>
<svg class="abs" style="left:162px;top:647px" width="16" height="15" viewBox="0 0 16 15"><rect x="0" y="4.5" width="4" height="6" fill="#6a6a82"/><path d="M4 4.5 L9.5 0.3 L9.5 14.7 L4 10.5 Z" fill="#3d4566"/><path d="M12 4 C14 5.5 14 9.5 12 11" fill="none" stroke="#3d4566" stroke-width="1.4"/></svg>
<div class="abs" style="left:186px;top:645px;font-size:14px;line-height:20px;font-weight:bold;color:#3a405e;white-space:nowrap">快訊:</div>
<div id="circle" class="abs"></div>
<svg class="abs" style="left:170px;top:776px" width="72" height="72" viewBox="0 0 72 72"><circle cx="36" cy="36" r="34" fill="#1e428c" stroke="#f1f1f1" stroke-width="3"/><circle cx="36" cy="36" r="30.5" fill="none" stroke="#f5b324" stroke-width="2"/><path d="M22 24 L23 20 L25 23 L27 20 L28 24 C31 26 33 29 32 32 L19 32 C18 28 19 26 22 24 Z" fill="#f5b324"/></svg>
<div id="winshadow" class="abs"></div>

<div id="titlebar" class="abs"></div>
<svg class="abs" style="left:1290px;top:0" width="125" height="27" viewBox="1290 0 125 27">
<path d="M1302 10.3 L1307.6 15.8 L1313.2 10.3" fill="none" stroke="#fff" stroke-width="1.2"/>
<rect x="1333" y="12" width="12" height="1.2" fill="#fff"/>
<rect x="1365.5" y="8.5" width="10" height="9" fill="none" stroke="#fff" stroke-width="1"/>
<path d="M1395 7 L1406 18 M1406 7 L1395 18" stroke="#fff" stroke-width="1.1"/>
</svg>
<div id="win" class="abs"></div>
<div id="wtop" class="abs"></div>
<div id="wleft" class="abs"></div>
<div id="sidebar" class="abs"></div>
<div id="sbhead" class="abs"><svg width="212" height="48" viewBox="0 0 212 48" style="position:absolute;left:0;top:0">
<g opacity=".55">
<g transform="translate(176 20) rotate(24) translate(-176 -20)">
<path d="M156 14 C156 8 164 6 176 7 C190 8 197 13 196 21 C195 28 189 30 183 27 C178 25 173 25 168 27 C160 30 156 22 156 14 Z" fill="#3ba6ee"/>
</g>
<circle cx="169" cy="16.5" r="5.5" fill="#2a92e6"/>
<path d="M166 13.5 L172 19.5 M172 13.5 L166 19.5" stroke="#3ba6ee" stroke-width="1.6"/>
<circle cx="182" cy="26" r="1.9" fill="#2a92e6"/><circle cx="189" cy="24" r="1.9" fill="#2a92e6"/><circle cx="184" cy="32" r="1.9" fill="#2a92e6"/><circle cx="191" cy="30" r="1.9" fill="#2a92e6"/>
<path d="M177 14 L181 16 M182 17 L186 19" stroke="#2a92e6" stroke-width="1.6"/>
<path d="M185 8 C187 4 190 5 192 7 C194 9 195 6 193 1" fill="none" stroke="#3ba6ee" stroke-width=".9"/>
<circle cx="147" cy="46" r="7" fill="#2c9ae8"/>
</g>
</svg></div>
<div id="main" class="abs"></div>
<div id="crumb" class="abs"></div>
<div id="wline" class="abs"></div>
<div id="sbtitle" class="abs">玩家中心</div><div id="sbsub" class="abs">PLAYERS CENTER</div>
<div class="sbt" style="top:80px"><span>財務中心</span></div>
<div class="mi" style="top:130px"><span class="ic" style="left:18px"><svg width="16" height="14" viewBox="0 0 16 14"><rect x="0.8" y="0.8" width="14.4" height="12.4" rx="2" fill="none" stroke="#8e9aa5" stroke-width="1.6"/><rect x="1" y="4.2" width="14" height="1.6" fill="#8e9aa5"/><rect x="3" y="8.5" width="1" height="2.5" fill="#8e9aa5"/><rect x="5" y="8.5" width="1" height="2.5" fill="#8e9aa5"/><rect x="7" y="8.5" width="1" height="2.5" fill="#8e9aa5"/></svg></span><span class="tx" style="left:52px">存款專區</span></div>
<div class="mi" style="top:170px"><span class="ic" style="left:17px"><svg width="18" height="12" viewBox="0 0 18 12"><rect x="6" y="0" width="11" height="3.6" fill="#8e9aa5"/><path d="M2.5 7.5 C4 5.5 6 5 9 5 L12 5 C13 5 13 6.2 12 6.2 L8.5 6.4 L13 6.6 L17 4.5 L17.5 5.2 C15 7.5 13 9 9.5 9 L5 8.8 Z" fill="#8e9aa5"/><path d="M0.5 8.5 L3 11.5" stroke="#8e9aa5" stroke-width="2"/></svg></span><span class="tx" style="left:52px">取款專區</span></div>
<div class="mi" style="top:210px"><span class="ic" style="left:17px"><svg width="13" height="13" viewBox="0 0 13 13"><path d="M4 0.5 L9 0.5 L8 3 L5 3 Z" fill="#555"/><path d="M5 3.2 L8 3.2 C11 5 13 8 12.6 11 C12.4 12.3 11.5 12.6 10 12.6 L3 12.6 C1.5 12.6 0.6 12.3 0.4 11 C0 8 2 5 5 3.2 Z" fill="#555"/><path d="M4.8 6 L6.5 8 L8.2 6 M6.5 8 L6.5 11 M5 8.8 L8 8.8 M5 10 L8 10" stroke="#fff" stroke-width="0.9" fill="none"/></svg></span><span class="tx" style="left:48px">充值記錄</span></div>
<div class="mi" style="top:250px"><span class="ic" style="left:17px"><svg width="13" height="12" viewBox="0 0 13 12"><path d="M1 5 L8 0.8 L10 4" fill="none" stroke="#555" stroke-width="1.3"/><rect x="2.5" y="4" width="10" height="7.3" fill="none" stroke="#555" stroke-width="1.3"/><rect x="0.7" y="5" width="3" height="4" fill="none" stroke="#555" stroke-width="1.1"/><rect x="3" y="10" width="9" height="1.5" fill="#555"/></svg></span><span class="tx" style="left:48px">提現記錄</span></div>
<div class="mi" style="top:290px"><span class="ic" style="left:17px"><svg width="13" height="12" viewBox="0 0 13 12"><path d="M1 5 L9 1 L11 4" fill="none" stroke="#555" stroke-width="1.3"/><rect x="0.8" y="4.5" width="11.5" height="7" rx="1" fill="none" stroke="#555" stroke-width="1.3"/><circle cx="6.5" cy="8" r="2" fill="none" stroke="#555" stroke-width="1.2"/><rect x="2" y="7.4" width="1.5" height="1.2" fill="#555"/><rect x="9.5" y="7.4" width="1.5" height="1.2" fill="#555"/></svg></span><span class="tx" style="left:48px">資金記錄</span></div>
<div class="mi act" style="top:330px"><span class="ic" style="left:17px"><svg width="13" height="10" viewBox="0 0 13 10"><rect x="0.7" y="0.7" width="11.6" height="8.6" rx="1.5" fill="none" stroke="#fff" stroke-width="1.4"/><rect x="2.3" y="2.6" width="8.4" height="1.2" fill="#fff"/><rect x="2.3" y="4.5" width="8.4" height="1.2" fill="#fff"/><rect x="2.3" y="6.4" width="8.4" height="1.2" fill="#fff"/></svg></span><span class="tx" style="left:48px">HH彩票下注</span><svg class="chev" width="8" height="12" viewBox="0 0 8 12" style="position:absolute;left:177px;top:14px"><path d="M2.2 2.2 L5.6 6 L2.2 9.8" fill="none" stroke="#fff" stroke-width="1.5" stroke-linecap="round" stroke-linejoin="round"/></svg></div>
<div class="mi" style="top:370px"><span class="ic" style="left:17px"><svg width="13" height="10" viewBox="0 0 13 10"><rect x="0.6" y="0.6" width="3" height="3" fill="none" stroke="#555" stroke-width="1.1"/><rect x="0.6" y="6" width="3" height="3" fill="none" stroke="#555" stroke-width="1.1"/><rect x="5.5" y="0.5" width="7.5" height="1.1" fill="#555"/><rect x="5.5" y="3" width="7.5" height="1.1" fill="#555"/><rect x="5.5" y="6" width="7.5" height="1.1" fill="#555"/><rect x="5.5" y="8.5" width="7.5" height="1.1" fill="#555"/></svg></span><span class="tx" style="left:48px">廳室投註記錄</span></div>
<div class="mi" style="top:410px"><span class="ic" style="left:18px"><svg width="11" height="11" viewBox="0 0 11 11"><rect x="0.6" y="0.6" width="9.8" height="9.8" fill="none" stroke="#555" stroke-width="1.2"/><path d="M2.2 8.5 L4.5 5.5 L6 6.8 L8.8 3" fill="none" stroke="#555" stroke-width="1.1"/><path d="M3.3 2 L3.3 4 M2.3 3 L4.3 3" stroke="#555" stroke-width="0.8"/></svg></span><span class="tx" style="left:48px">玩家投注報表</span></div>
<div class="sbt" style="top:449px"><span>個人中心</span></div>
<div class="mi" style="top:498px"><span class="ic" style="left:17px"><svg width="15" height="15" viewBox="0 0 15 15"><path d="M7.5 0.5 C10 0.5 11.3 2.3 11.3 5 L11.3 9 L14.8 12 L0.2 12 L3.7 9 L3.7 5 C3.7 2.3 5 0.5 7.5 0.5 Z" fill="#c4c9cf"/><path d="M6 13.3 L9 13.3 L7.5 14.6 Z" fill="#c4c9cf"/></svg></span><span class="tx" style="left:52px">消息公告</span></div>
<div class="mi" style="top:538px"><span class="ic" style="left:17px"><svg width="16" height="15" viewBox="0 0 16 15"><ellipse cx="8" cy="4.6" rx="3.6" ry="4.4" fill="#98a3ad"/><path d="M0 15 L0 13.5 C0 11 3 10 5.5 9.5 L10.5 9.5 C13 10 16 11 16 13.5 L16 15 Z" fill="#98a3ad"/></svg></span><span class="tx" style="left:52px">個人資料</span></div>
<div class="mi" style="top:578px"><span class="ic" style="left:17px"><svg width="13" height="12" viewBox="-6.5 -6 13 12"><g fill="#555"><circle r="4.2"/><g id="t"><rect x="-1.2" y="-6" width="2.4" height="2.6"/></g><use href="#t" transform="rotate(45)"/><use href="#t" transform="rotate(90)"/><use href="#t" transform="rotate(135)"/><use href="#t" transform="rotate(180)"/><use href="#t" transform="rotate(225)"/><use href="#t" transform="rotate(270)"/><use href="#t" transform="rotate(315)"/></g><circle r="2.2" fill="#fff"/><circle r="1" fill="#555"/></svg></span><span class="tx" style="left:48px">修改密碼</span></div>
<div class="sbt" style="top:618px"><span>代理中心</span></div>
<div class="mi" style="top:668px"><span class="ic" style="left:18px"><svg width="11" height="14" viewBox="0 0 11 14"><path d="M1.5 0.7 L7 0.7 L10.3 4 L10.3 12 C10.3 12.8 9.8 13.3 9 13.3 L2 13.3 C1.2 13.3 0.7 12.8 0.7 12 L0.7 1.5 C0.7 1 1 0.7 1.5 0.7 Z" fill="none" stroke="#555" stroke-width="1.3"/><path d="M7 0.7 L7 4 L10.3 4" fill="#555"/></svg></span><span class="tx" style="left:43px">代理規則說明</span></div>
<div class="mi" style="top:708px"><span class="ic" style="left:19px"><svg width="9" height="13" viewBox="0 0 9 13"><circle cx="6.8" cy="2.2" r="2.1" fill="#555"/><circle cx="2.2" cy="6.5" r="2.1" fill="#555"/><circle cx="6.8" cy="10.8" r="2.1" fill="#555"/><path d="M6.8 2.2 L2.2 6.5 L6.8 10.8" fill="none" stroke="#555" stroke-width="1.4"/></svg></span><span class="tx" style="left:43px">代理推廣管理</span></div>
<div class="mi" style="top:748px"><span class="ic" style="left:17px"><svg width="13" height="12" viewBox="0 0 13 12"><path d="M2.5 2 L0.7 2 L0.7 11.3 L12.3 11.3 L12.3 0.7 L2.5 0.7 Z" fill="none" stroke="#555" stroke-width="1.2"/><path d="M2.5 0.7 L2.5 11.3" stroke="#555" stroke-width="1"/><rect x="4" y="2.2" width="2.5" height="2.5" fill="#555"/><rect x="7.3" y="2.2" width="3.8" height="1" fill="#555"/><rect x="7.3" y="4" width="3.8" height="1" fill="#555"/><rect x="4" y="6" width="7.2" height="4.6" fill="#888"/></svg></span><span class="tx" style="left:43px">代理國隊統計</span></div>
<svg id="ham" class="abs" width="12" height="12" viewBox="0 0 12 12"><rect x="0" y="0" width="12" height="2" fill="#999"/><rect x="0" y="5" width="12" height="2" fill="#999"/><rect x="0" y="10" width="12" height="2" fill="#999"/></svg>
<div id="crumbtx" class="abs">HH彩票下注</div>
<div id="filter" class="abs"></div>
<div class="lb" style="left:470px">彩種名稱:</div>
<div class="sel" style="left:535px;width:122px">全部<span style="position:absolute;left:107px;top:12px"><svg width="11" height="7" viewBox="0 0 11 7"><path d="M1.2 1.2 L5.5 5.5 L9.8 1.2" fill="none" stroke="#333" stroke-width="2"/></svg></span></div>
<div class="lb" style="left:661px">開獎狀態:</div>
<div class="sel" style="left:725px;width:66px">全部<span style="position:absolute;left:51px;top:12px"><svg width="11" height="7" viewBox="0 0 11 7"><path d="M1.2 1.2 L5.5 5.5 L9.8 1.2" fill="none" stroke="#333" stroke-width="2"/></svg></span></div>
<div class="lb" style="left:795px">注單狀態:</div>
<div class="sel" style="left:860px;width:52px">全部<span style="position:absolute;left:37px;top:12px"><svg width="11" height="7" viewBox="0 0 11 7"><path d="M1.2 1.2 L5.5 5.5 L9.8 1.2" fill="none" stroke="#333" stroke-width="2"/></svg></span></div>
<div class="lb" style="left:917px">開始日期:</div>
<div class="inp" style="left:980px;width:150px">2024-10-11 12:00:00</div>
<div class="lb" style="left:1133px">結束日期:</div>
<div class="inp" style="left:1197px;width:150px">2024-10-13 12:00:00</div>
<div id="btn" class="abs">查詢</div>
<div id="tbl" class="abs"></div>
<div id="thead" class="abs"></div>
<div id="thline" class="abs"></div>
<div class="hl" style="top:283px"></div>
<div class="hl" style="top:340px"></div>
<div class="hl" style="top:397px"></div>
<div class="hl" style="top:454px"></div>
<div class="hl" style="top:511px"></div>
<div class="hl" style="top:568px"></div>
<div class="hl" style="top:625px"></div>
<div class="hl" style="top:682px"></div>
<div class="hl" style="top:739px"></div>
<div class="hl" style="top:796px"></div>
<div class="vl" style="left:588px"></div>
<div class="vl" style="left:692px"></div>
<div class="vl" style="left:767px"></div>
<div class="vl" style="left:863px"></div>
<div class="vl" style="left:1005px"></div>
<div class="vl" style="left:1061px"></div>
<div class="vl" style="left:1115px"></div>
<div class="vl" style="left:1207px"></div>
<div class="vl" style="left:1290px"></div>
<div class="vl" style="left:1351px"></div>
<div class="vl" style="left:1411px"></div>
<div class="th" style="left:463.5px;width:120px">訂單號</div>
<div class="th" style="left:580.0px;width:120px">期數</div>
<div class="th" style="left:669.5px;width:120px">彩種名稱</div>
<div class="th" style="left:755.0px;width:120px">玩法</div>
<div class="th" style="left:874.5px;width:120px">下注信息</div>
<div class="th" style="left:974.0px;width:120px">投注額</div>
<div class="th" style="left:1028.5px;width:120px">輸贏</div>
<div class="th" style="left:1101.0px;width:120px">開獎結果</div>
<div class="th" style="left:1188.5px;width:120px">下注時間</div>
<div class="th" style="left:1260.5px;width:120px">開獎狀態</div>
<div class="th" style="left:1322.0px;width:120px">注單狀態</div>
<div class="td" style="left:443.5px;width:160px;top:237px">215217287106928<br>7750</div>
<div class="td" style="left:560.0px;width:160px;top:237px">31190163</div>
<div class="td cj" style="left:649.5px;width:160px;top:237px">澳洲幸运8</div>
<div class="td cj" style="left:735.0px;width:160px;top:237px">第四球(大)</div>
<div class="td" style="left:854.5px;width:160px;top:237px">大-A盤@1.985</div>
<div class="td" style="left:954.0px;width:160px;top:237px">7.00</div>
<div class="td" style="left:1008.5px;width:160px;top:237px">6.90</div>
<div class="td" style="letter-spacing:-.25px;left:1081.0px;width:160px;top:237px">19,6,12,16,7,<br>2,14,1</div>
<div class="td" style="left:1168.5px;width:160px;top:237px">2024-10-12<br>13:24:52</div>
<div class="td cj" style="left:1240.5px;width:160px;top:237px">已開獎</div>
<div class="td cj" style="left:1302.0px;width:160px;top:237px">有效</div>
<div class="td" style="left:443.5px;width:160px;top:294px">215217287104084<br>1650</div>
<div class="td" style="left:560.0px;width:160px;top:294px">31190162</div>
<div class="td cj" style="left:649.5px;width:160px;top:294px">澳洲幸运8</div>
<div class="td cj" style="left:735.0px;width:160px;top:294px">第四球(小)</div>
<div class="td" style="left:854.5px;width:160px;top:294px">小-A盤@1.985</div>
<div class="td" style="left:954.0px;width:160px;top:294px">14.00</div>
<div class="td" style="left:1008.5px;width:160px;top:294px">13.79</div>
<div class="td" style="letter-spacing:-.25px;left:1081.0px;width:160px;top:294px">13,15,19,6,14,<br>7,16,20</div>
<div class="td" style="left:1168.5px;width:160px;top:294px">2024-10-12<br>13:20:08</div>
<div class="td cj" style="left:1240.5px;width:160px;top:294px">已開獎</div>
<div class="td cj" style="left:1302.0px;width:160px;top:294px">有效</div>
<div class="td" style="left:443.5px;width:160px;top:351px">215217287101494<br>1920</div>
<div class="td" style="left:560.0px;width:160px;top:351px">31190161</div>
<div class="td cj" style="left:649.5px;width:160px;top:351px">澳洲幸运8</div>
<div class="td cj" style="left:735.0px;width:160px;top:351px">第四球(大)</div>
<div class="td" style="left:854.5px;width:160px;top:351px">大-A盤@1.985</div>
<div class="td" style="left:954.0px;width:160px;top:351px">14.00</div>
<div class="td" style="left:1008.5px;width:160px;top:351px">13.79</div>
<div class="td" style="letter-spacing:-.25px;left:1081.0px;width:160px;top:351px">7,11,10,20,8,<br>9,1,5</div>
<div class="td" style="left:1168.5px;width:160px;top:351px">2024-10-12<br>13:15:49</div>
<div class="td cj" style="left:1240.5px;width:160px;top:351px">已開獎</div>
<div class="td cj" style="left:1302.0px;width:160px;top:351px">有效</div>
<div class="td" style="left:443.5px;width:160px;top:408px">215217287098114<br>9580</div>
<div class="td" style="left:560.0px;width:160px;top:408px">31190160</div>
<div class="td cj" style="left:649.5px;width:160px;top:408px">澳洲幸运8</div>
<div class="td cj" style="left:735.0px;width:160px;top:408px">第二球(小)</div>
<div class="td" style="left:854.5px;width:160px;top:408px">小-A盤@1.985</div>
<div class="td" style="left:954.0px;width:160px;top:408px">14.00</div>
<div class="td" style="left:1008.5px;width:160px;top:408px">13.79</div>
<div class="td" style="letter-spacing:-.25px;left:1081.0px;width:160px;top:408px">9,4,19,8,20,2,<br>1,10</div>
<div class="td" style="left:1168.5px;width:160px;top:408px">2024-10-12<br>13:10:11</div>
<div class="td cj" style="left:1240.5px;width:160px;top:408px">已開獎</div>
<div class="td cj" style="left:1302.0px;width:160px;top:408px">有效</div>
<div class="td" style="left:443.5px;width:160px;top:465px">215217287063202<br>9050</div>
<div class="td" style="left:560.0px;width:160px;top:465px">31190148</div>
<div class="td cj" style="left:649.5px;width:160px;top:465px">澳洲幸运8</div>
<div class="td cj" style="left:735.0px;width:160px;top:465px">第二球(大)</div>
<div class="td" style="left:854.5px;width:160px;top:465px">大-A盤@1.985</div>
<div class="td" style="left:954.0px;width:160px;top:465px">14.00</div>
<div class="td" style="left:1008.5px;width:160px;top:465px">-14.00</div>
<div class="td" style="letter-spacing:-.25px;left:1081.0px;width:160px;top:465px">2,3,16,13,9,1<br>0,11,4</div>
<div class="td" style="left:1168.5px;width:160px;top:465px">2024-10-12<br>12:12:00</div>
<div class="td cj" style="left:1240.5px;width:160px;top:465px">已開獎</div>
<div class="td cj" style="left:1302.0px;width:160px;top:465px">有效</div>
<div class="td" style="left:443.5px;width:160px;top:522px">215217287059025<br>1780</div>
<div class="td" style="left:560.0px;width:160px;top:522px">31190147</div>
<div class="td cj" style="left:649.5px;width:160px;top:522px">澳洲幸运8</div>
<div class="td cj" style="left:735.0px;width:160px;top:522px">第一球(大)</div>
<div class="td" style="left:854.5px;width:160px;top:522px">大-A盤@1.985</div>
<div class="td" style="left:954.0px;width:160px;top:522px">14.00</div>
<div class="td" style="left:1008.5px;width:160px;top:522px">-14.00</div>
<div class="td" style="letter-spacing:-.25px;left:1081.0px;width:160px;top:522px">5,1,19,8,10,7,<br>6,11</div>
<div class="td" style="left:1168.5px;width:160px;top:522px">2024-10-12<br>12:05:02</div>
<div class="td cj" style="left:1240.5px;width:160px;top:522px">已開獎</div>
<div class="td cj" style="left:1302.0px;width:160px;top:522px">有效</div>
<div class="td" style="left:443.5px;width:160px;top:579px">215217287055718<br>9460</div>
<div class="td" style="left:560.0px;width:160px;top:579px">31190146</div>
<div class="td cj" style="left:649.5px;width:160px;top:579px">澳洲幸运8</div>
<div class="td cj" style="left:735.0px;width:160px;top:579px">第三球(大)</div>
<div class="td" style="left:854.5px;width:160px;top:579px">大-A盤@1.985</div>
<div class="td" style="left:954.0px;width:160px;top:579px">14.00</div>
<div class="td" style="left:1008.5px;width:160px;top:579px">-14.00</div>
<div class="td" style="letter-spacing:-.25px;left:1081.0px;width:160px;top:579px">14,12,1,19,17,<br>10,6,3</div>
<div class="td" style="left:1168.5px;width:160px;top:579px">2024-10-12<br>11:59:31</div>
<div class="td cj" style="left:1240.5px;width:160px;top:579px">已開獎</div>
<div class="td cj" style="left:1302.0px;width:160px;top:579px">有效</div>
<div class="td" style="left:443.5px;width:160px;top:636px">215217287052796<br>0190</div>
<div class="td" style="left:560.0px;width:160px;top:636px">31190145</div>
<div class="td cj" style="left:649.5px;width:160px;top:636px">澳洲幸运8</div>
<div class="td cj" style="left:735.0px;width:160px;top:636px">第三球(小)</div>
<div class="td" style="left:854.5px;width:160px;top:636px">小-A盤@1.985</div>
<div class="td" style="left:954.0px;width:160px;top:636px">14.00</div>
<div class="td" style="left:1008.5px;width:160px;top:636px">13.79</div>
<div class="td" style="letter-spacing:-.25px;left:1081.0px;width:160px;top:636px">17,7,5,11,18,1<br>2,19,20</div>
<div class="td" style="left:1168.5px;width:160px;top:636px">2024-10-12<br>11:54:39</div>
<div class="td cj" style="left:1240.5px;width:160px;top:636px">已開獎</div>
<div class="td cj" style="left:1302.0px;width:160px;top:636px">有效</div>
<div class="td" style="left:443.5px;width:160px;top:693px">215217287049851<br>3260</div>
<div class="td" style="left:560.0px;width:160px;top:693px">31190144</div>
<div class="td cj" style="left:649.5px;width:160px;top:693px">澳洲幸运8</div>
<div class="td cj" style="left:735.0px;width:160px;top:693px">第三球(大)</div>
<div class="td" style="left:854.5px;width:160px;top:693px">大-A盤@1.985</div>
<div class="td" style="left:954.0px;width:160px;top:693px">14.00</div>
<div class="td" style="left:1008.5px;width:160px;top:693px">13.79</div>
<div class="td" style="letter-spacing:-.25px;left:1081.0px;width:160px;top:693px">15,19,17,11,2,<br>13,16,6</div>
<div class="td" style="left:1168.5px;width:160px;top:693px">2024-10-12<br>11:49:45</div>
<div class="td cj" style="left:1240.5px;width:160px;top:693px">已開獎</div>
<div class="td cj" style="left:1302.0px;width:160px;top:693px">有效</div>
<div class="td" style="left:443.5px;width:160px;top:750px">215217287046720<br>7360</div>
<div class="td" style="left:560.0px;width:160px;top:750px">31190143</div>
<div class="td cj" style="left:649.5px;width:160px;top:750px">澳洲幸运8</div>
<div class="td cj" style="left:735.0px;width:160px;top:750px">第三球(小)</div>
<div class="td" style="left:854.5px;width:160px;top:750px">小-A盤@1.985</div>
<div class="td" style="left:954.0px;width:160px;top:750px">14.00</div>
<div class="td" style="left:1008.5px;width:160px;top:750px">13.79</div>
<div class="td" style="letter-spacing:-.25px;left:1081.0px;width:160px;top:750px">10,18,1,14,17,<br>16,12,3</div>
<div class="td" style="left:1168.5px;width:160px;top:750px">2024-10-12<br>11:44:32</div>
<div class="td cj" style="left:1240.5px;width:160px;top:750px">已開獎</div>
<div class="td cj" style="left:1302.0px;width:160px;top:750px">有效</div>
<div id="bottomstrip" class="abs"></div>
</body>
</html>
